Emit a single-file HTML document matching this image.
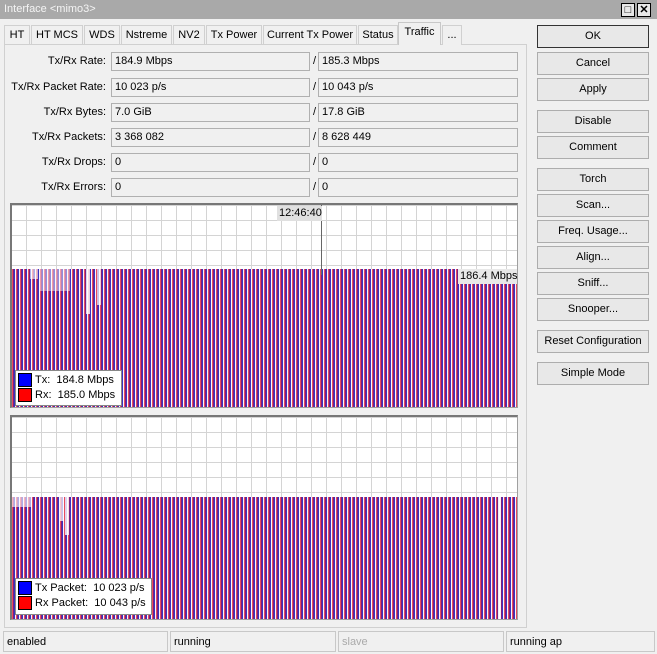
<!DOCTYPE html>
<html><head><meta charset="utf-8"><style>
*{box-sizing:border-box;margin:0;padding:0}
body{width:657px;height:654px;background:#f0f0f0;font-family:"Liberation Sans",sans-serif;font-size:11px;color:#000;position:relative;overflow:hidden}
.a{position:absolute}
.title{left:0;top:0;width:657px;height:19px;background:#a9a9a9;color:#f4f4f4;font-size:11px;padding:3px 0 0 4px}
.wb{top:3px;width:14px;height:14px;border:1px solid #000;background:#e8e8e8;font-size:11px;line-height:12px;text-align:center;font-weight:bold}
.tab{top:25px;height:20px;border:1px solid #d0d0d0;border-bottom:none;background:#f0f0f0;padding:3px 0 0;text-align:center;font-size:11px}
.panel{left:4px;top:44px;width:523px;height:584px;border:1px solid #d0d0d0;background:#f0f0f0}
.btn{left:537px;width:112px;height:23px;border:1px solid #adadad;background:#e8e8e8;text-align:center;line-height:21px;font-size:11px}
.lbl{left:0;width:106px;text-align:right;font-size:11px}
.fld{height:19px;border:1px solid #b0b0b0;background:#f0f0f0;padding:2px 0 0 3px;font-size:11px}
.graph{left:10px;width:508px;height:205px;border:1px solid #a0a0a0;border-left:2px solid #777;border-top:2px solid #777;background-color:#fff;
background-image:linear-gradient(#d4d4d4 1px,transparent 1px),linear-gradient(90deg,#d4d4d4 1px,transparent 1px);background-size:15px 15px;background-position:-1px 0;overflow:hidden}
.bars{left:0;width:506px;background:repeating-linear-gradient(90deg,#e84a60 0 1px,#7a2080 1px 2px,#3a32c0 2px 3px,#f8f4fa 3px 4px)}
.wh{background:#fff}
.leg{background:#fff;border:1px solid #888;font-size:11px}
.sw{display:inline-block;width:14px;height:14px;border:1px solid #000;vertical-align:middle;margin:0 3px 0 2px}
.st{top:631px;height:21px;border:1px solid #c8c8c8;padding:4px 0 0 3px;font-size:11px}
</style></head><body>
<div class="a title">Interface &lt;mimo3&gt;</div>
<div class="a wb" style="left:621px">□</div><div class="a wb" style="left:637px">✕</div>

<div class="a tab" style="left:4px;width:26px">HT</div>
<div class="a tab" style="left:31px;width:52px">HT MCS</div>
<div class="a tab" style="left:84px;width:36px">WDS</div>
<div class="a tab" style="left:121px;width:51px">Nstreme</div>
<div class="a tab" style="left:173px;width:32px">NV2</div>
<div class="a tab" style="left:206px;width:56px">Tx Power</div>
<div class="a tab" style="left:263px;width:94px">Current Tx Power</div>
<div class="a tab" style="left:358px;width:40px">Status</div>
<div class="a panel"></div>
<div class="a tab" style="left:398px;top:22px;height:23px;width:43px;background:#f0f0f0;border-color:#c8c8c8;z-index:2">Traffic</div>
<div class="a tab" style="left:442px;width:20px">...</div>

<div class="a lbl" style="top:55px">Tx/Rx Rate:</div>
<div class="a fld" style="left:111px;top:52px;width:199px">184.9 Mbps</div><div class="a" style="left:313px;top:55px">/</div><div class="a fld" style="left:318px;top:52px;width:200px">185.3 Mbps</div>
<div class="a lbl" style="top:81px">Tx/Rx Packet Rate:</div>
<div class="a fld" style="left:111px;top:78px;width:199px">10 023 p/s</div><div class="a" style="left:313px;top:81px">/</div><div class="a fld" style="left:318px;top:78px;width:200px">10 043 p/s</div>
<div class="a lbl" style="top:106px">Tx/Rx Bytes:</div>
<div class="a fld" style="left:111px;top:103px;width:199px">7.0 GiB</div><div class="a" style="left:313px;top:106px">/</div><div class="a fld" style="left:318px;top:103px;width:200px">17.8 GiB</div>
<div class="a lbl" style="top:131px">Tx/Rx Packets:</div>
<div class="a fld" style="left:111px;top:128px;width:199px">3 368 082</div><div class="a" style="left:313px;top:131px">/</div><div class="a fld" style="left:318px;top:128px;width:200px">8 628 449</div>
<div class="a lbl" style="top:156px">Tx/Rx Drops:</div>
<div class="a fld" style="left:111px;top:153px;width:199px">0</div><div class="a" style="left:313px;top:156px">/</div><div class="a fld" style="left:318px;top:153px;width:200px">0</div>
<div class="a lbl" style="top:181px">Tx/Rx Errors:</div>
<div class="a fld" style="left:111px;top:178px;width:199px">0</div><div class="a" style="left:313px;top:181px">/</div><div class="a fld" style="left:318px;top:178px;width:200px">0</div>

<div class="a graph" style="top:203px">
 <div class="a bars" style="top:64px;height:140px"></div>
 <div class="a wh" style="left:18px;top:64px;width:8px;height:10px;opacity:.6"></div>
 <div class="a wh" style="left:28px;top:64px;width:30px;height:22px;opacity:.45"></div>
 <div class="a wh" style="left:74px;top:64px;width:4px;height:45px;opacity:.8"></div>
 <div class="a wh" style="left:85px;top:64px;width:4px;height:36px;opacity:.7"></div>
 <div class="a" style="left:309px;top:0;width:1px;height:70px;background:#666"></div>
 <div class="a" style="left:265px;top:1px;width:45px;height:15px;background:#e0e0e0;font-size:11px;padding:1px 0 0 2px">12:46:40</div>
 <div class="a" style="left:446px;top:64px;width:60px;height:15px;background:#e8e8e8;font-size:11px;padding:1px 0 0 2px">186.4 Mbps</div>
 <div class="a leg" style="left:3px;top:165px;width:107px;height:36px">
  <div style="margin-top:2px"><span class="sw" style="background:#00f"></span>Tx:&nbsp; 184.8 Mbps</div>
  <div style="margin-top:1px"><span class="sw" style="background:#f00"></span>Rx:&nbsp; 185.0 Mbps</div>
 </div>
</div>

<div class="a graph" style="top:415px">
 <div class="a bars" style="top:80px;height:124px"></div>
 <div class="a wh" style="left:0;top:80px;width:20px;height:10px;opacity:.6"></div>
 <div class="a wh" style="left:48px;top:80px;width:4px;height:24px;opacity:.7"></div>
 <div class="a wh" style="left:53px;top:80px;width:4px;height:38px;opacity:.8"></div>
 <div class="a wh" style="left:486px;top:80px;width:3px;height:124px;opacity:.9"></div>
 <div class="a leg" style="left:3px;top:161px;width:137px;height:37px">
  <div style="margin-top:2px"><span class="sw" style="background:#00f"></span>Tx Packet:&nbsp; 10 023 p/s</div>
  <div style="margin-top:1px"><span class="sw" style="background:#f00"></span>Rx Packet:&nbsp; 10 043 p/s</div>
 </div>
</div>

<div class="a btn" style="top:25px;border:1px solid #333">OK</div>
<div class="a btn" style="top:52px">Cancel</div>
<div class="a btn" style="top:78px">Apply</div>
<div class="a btn" style="top:110px">Disable</div>
<div class="a btn" style="top:136px">Comment</div>
<div class="a btn" style="top:168px">Torch</div>
<div class="a btn" style="top:194px">Scan...</div>
<div class="a btn" style="top:220px">Freq. Usage...</div>
<div class="a btn" style="top:246px">Align...</div>
<div class="a btn" style="top:272px">Sniff...</div>
<div class="a btn" style="top:298px">Snooper...</div>
<div class="a btn" style="top:330px">Reset Configuration</div>
<div class="a btn" style="top:362px">Simple Mode</div>

<div class="a st" style="left:3px;width:165px">enabled</div>
<div class="a st" style="left:170px;width:166px">running</div>
<div class="a st" style="left:338px;width:166px;color:#aaa">slave</div>
<div class="a st" style="left:506px;width:149px">running ap</div>
</body></html>
